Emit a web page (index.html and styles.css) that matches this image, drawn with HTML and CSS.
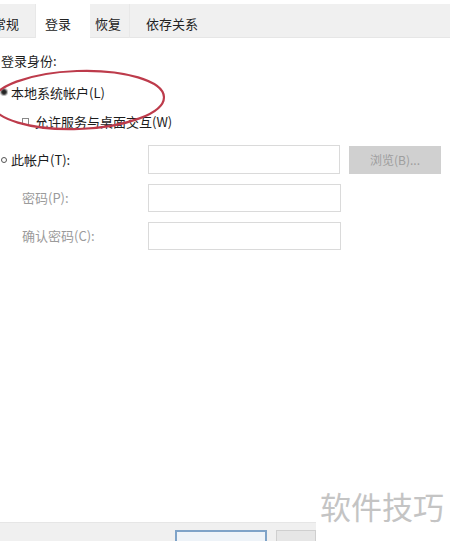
FILE: index.html
```html
<!DOCTYPE html>
<html lang="zh-CN">

<head>
    <meta charset="UTF-8">
    <title>登录</title>
    <link rel="stylesheet" href="styles.css">
</head>

<body>
    <div class="page">
        <div class="tabs">
            <div class="tab tab1">常规</div>
            <div class="tab tab2 on">登录</div>
            <div class="tab tab3">恢复</div>
            <div class="tab tab4">依存关系</div>
        </div>

        <div class="body">
            <div class="head">登录身份:</div>
            <div class="row r1"><span class="radio checked"></span>本地系统帐户(L)</div>
            <div class="row r2"><span class="check"></span>允许服务与桌面交互(W)</div>

            <div class="field f1">
                <div class="lbl"><span class="radio"></span>此帐户(T):</div>
                <div class="box"></div>
                <div class="btn">浏览(B)...</div>
            </div>
            <div class="field f2">
                <div class="lbl dim">密码(P):</div>
                <div class="box wide"></div>
            </div>
            <div class="field f2">
                <div class="lbl dim">确认密码(C):</div>
                <div class="box wide"></div>
            </div>
        </div>

        <div class="foot">
            <div class="strip">
                <div class="okbtn"></div>
                <div class="cancel"></div>
            </div>
        </div>

        <!-- red hand-drawn mark -->
        <svg class="mark" width="190" height="80" viewBox="0 0 190 80">
            <ellipse cx="96" cy="37" rx="86" ry="29" transform="rotate(-2 96 37)" fill="none" stroke="#bd3b4b" stroke-width="2.2"/>
        </svg>
        <div class="wm">软件技巧</div>
    </div>
</body>

</html>
```

FILE: styles.css
```css
* {
    box-sizing: border-box;
}

body {
    margin: 0;
    font-family: "Noto Sans CJK SC", "Liberation Sans", sans-serif;
    font-size: 13px;
    color: #1c1c1c;
    background: #fff;
}

.page {
    position: relative;
    width: 450px;
    height: 541px;
    overflow: hidden;
    display: flex;
    flex-direction: column;
}

.tabs {
    display: flex;
    margin-top: 4px;
    height: 34px;
    background: #f0f0f0;
    border-bottom: 1px solid #e6e6e6;
}

.tab {
    height: 34px;
    padding-top: 6px;
    line-height: 28px;
    color: #222;
    border-right: 1px solid #e8e8e8;
}

.tab1 {
    margin-left: -7px;
    padding-right: 16px;
}

.tab2 {
    padding: 0 19px 0 9px;
}

.tab3 {
    padding-left: 5px;
    padding-right: 8px;
}

.tab4 {
    padding-left: 16px;
    padding-right: 6px;
    border-right: none;
}

.tab.on {
    background: #fff;
    margin-top: -4px;
    height: 39px;
    line-height: 48px;
    border-right: none;
}

.body {
    flex: 1;
}

.head {
    margin-top: 14px;
    height: 18px;
    line-height: 18px;
    padding-left: 1px;
}

.row {
    display: flex;
    align-items: center;
    height: 18px;
}

.r1 {
    margin-top: 13px;
}

.r2 {
    margin-top: 11px;
    padding-left: 22px;
}

.radio {
    width: 6px;
    height: 6px;
    border: 1px solid #555;
    border-radius: 50%;
    margin: 0 4px 0 1px;
    flex-shrink: 0;
}

.radio.checked {
    background: #222;
    box-shadow: 0 0 0 1px #bbb;
}

.check {
    width: 7px;
    height: 7px;
    border: 1px solid #888;
    margin-right: 6px;
}

.field {
    display: flex;
    align-items: center;
    height: 29px;
}

.f1 {
    margin-top: 15px;
}

.f2 {
    margin-top: 9px;
}

.lbl {
    width: 148px;
    display: flex;
    align-items: center;
}

.lbl.dim {
    color: #9b9b9b;
    padding-left: 22px;
}

.box {
    width: 192px;
    height: 29px;
    border: 1px solid #dadada;
    background: #fff;
}

.box.wide {
    width: 193px;
    height: 28px;
}

.btn {
    margin-left: 9px;
    width: 92px;
    height: 28px;
    line-height: 28px;
    text-align: center;
    background: #d0d0d0;
    color: #9e9e9e;
    font-size: 12px;
}

.foot {
    height: 19px;
}

.strip {
    width: 316px;
    height: 19px;
    background: #f0f0f0;
    border-top: 1px solid #e6e6e6;
    display: flex;
    align-items: flex-end;
    padding-left: 175px;
}

.okbtn {
    width: 92px;
    height: 11px;
    border: 2px solid #7fa3c8;
    border-bottom: none;
    background: #eef3f8;
}

.cancel {
    margin-left: 9px;
    width: 40px;
    height: 11px;
    border: 1px solid #cfcfcf;
    border-bottom: none;
    background: #e6e6e6;
}

.mark {
    position: absolute;
    left: -18px;
    top: 63px;
}

.wm {
    position: absolute;
    left: 316px;
    top: 484px;
    width: 134px;
    height: 57px;
    padding-left: 4px;
    background: #fff;
    color: #c4c4c4;
    font-size: 31px;
    line-height: 44px;
}
```
